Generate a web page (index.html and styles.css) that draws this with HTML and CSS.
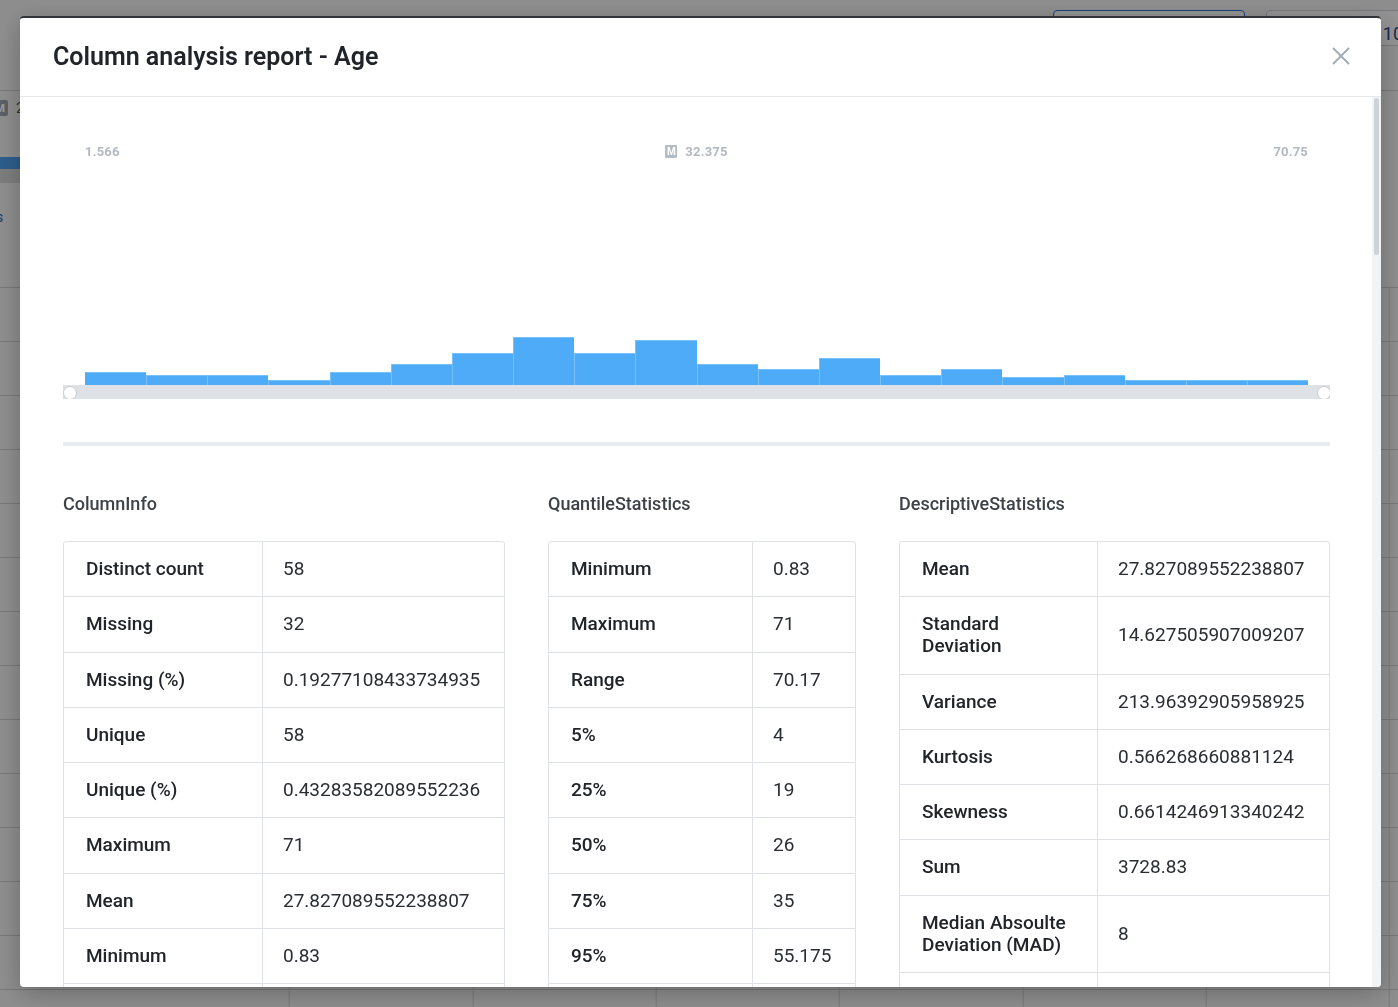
FILE: index.html
```html
<!DOCTYPE html>
<html lang="en">
<head>
<meta charset="utf-8">
<title>Column analysis report - Age</title>
<link rel="stylesheet" href="styles.css">
</head>
<body>
<div class="app">
  <div class="toolbar">
    <div class="tb-btn primary"></div>
    <div class="tb-btn last"><span class="tb-num">10</span></div>
  </div>
  <div class="grid-head"><span class="mini-badge">M</span><span class="head-num">2</span></div>
  <div class="profile">
    <div class="profile-bar"></div>
    <div class="profile-band"></div>
    <div class="profile-link">s</div>
  </div>
  <div class="grid-rows"></div>
</div>

<div class="backdrop"></div>

<div class="modal" role="dialog" aria-labelledby="modal-title">
  <header class="modal-header">
    <h2 id="modal-title" class="modal-title">Column analysis report - Age</h2>
    <button class="close-btn" type="button" aria-label="Close">
      <svg viewBox="0 0 18 18" width="18" height="18" aria-hidden="true"><path d="M1 1 L17 17 M17 1 L1 17" fill="none" stroke="#a3a9b0" stroke-width="1.8"/></svg>
    </button>
  </header>

  <div class="modal-body">
    <div class="modal-scroll">
      <div class="chart">
        <div class="axis-labels">
          <span>1.566</span>
          <span class="median"><span class="median-badge">M</span>32.375</span>
          <span>70.75</span>
        </div>
        <div class="bars">
          <div class="bar" style="height:13px"></div>
          <div class="bar" style="height:10px"></div>
          <div class="bar" style="height:10px"></div>
          <div class="bar" style="height:5px"></div>
          <div class="bar" style="height:13px"></div>
          <div class="bar" style="height:21px"></div>
          <div class="bar" style="height:32px"></div>
          <div class="bar" style="height:48px"></div>
          <div class="bar" style="height:32px"></div>
          <div class="bar" style="height:45px"></div>
          <div class="bar" style="height:21px"></div>
          <div class="bar" style="height:16px"></div>
          <div class="bar" style="height:27px"></div>
          <div class="bar" style="height:10px"></div>
          <div class="bar" style="height:16px"></div>
          <div class="bar" style="height:8px"></div>
          <div class="bar" style="height:10px"></div>
          <div class="bar" style="height:5px"></div>
          <div class="bar" style="height:5px"></div>
          <div class="bar" style="height:5px"></div>
        </div>
        <div class="range">
          <span class="handle handle-left"></span>
          <span class="handle handle-right"></span>
        </div>
      </div>

      <div class="divider"></div>

      <div class="stats">
        <section class="stat-section">
          <h3 class="stat-title">ColumnInfo</h3>
          <div class="kv kv-info">
            <div class="k">Distinct count</div><div class="v">58</div>
            <div class="k">Missing</div><div class="v">32</div>
            <div class="k">Missing (%)</div><div class="v">0.19277108433734935</div>
            <div class="k">Unique</div><div class="v">58</div>
            <div class="k">Unique (%)</div><div class="v">0.43283582089552236</div>
            <div class="k">Maximum</div><div class="v">71</div>
            <div class="k">Mean</div><div class="v">27.827089552238807</div>
            <div class="k">Minimum</div><div class="v">0.83</div>
            <div class="k">Zeros</div><div class="v">0</div>
          </div>
        </section>

        <section class="stat-section">
          <h3 class="stat-title">QuantileStatistics</h3>
          <div class="kv kv-quant">
            <div class="k">Minimum</div><div class="v">0.83</div>
            <div class="k">Maximum</div><div class="v">71</div>
            <div class="k">Range</div><div class="v">70.17</div>
            <div class="k">5%</div><div class="v">4</div>
            <div class="k">25%</div><div class="v">19</div>
            <div class="k">50%</div><div class="v">26</div>
            <div class="k">75%</div><div class="v">35</div>
            <div class="k">95%</div><div class="v">55.175</div>
            <div class="k">IQR</div><div class="v">16</div>
          </div>
        </section>

        <section class="stat-section">
          <h3 class="stat-title">DescriptiveStatistics</h3>
          <div class="kv kv-desc">
            <div class="k">Mean</div><div class="v">27.827089552238807</div>
            <div class="k">Standard Deviation</div><div class="v">14.627505907009207</div>
            <div class="k">Variance</div><div class="v">213.96392905958925</div>
            <div class="k">Kurtosis</div><div class="v">0.566268660881124</div>
            <div class="k">Skewness</div><div class="v">0.6614246913340242</div>
            <div class="k">Sum</div><div class="v">3728.83</div>
            <div class="k">Median Absoulte Deviation (MAD)</div><div class="v">8</div>
            <div class="k">CV</div><div class="v">0.5256571758508617</div>
          </div>
        </section>
      </div>
    </div>
    <div class="scrollbar" aria-hidden="true"><div class="scrollbar-thumb"></div></div>
  </div>
</div>
</body>
</html>
```

FILE: styles.css
```css
html, body {
  margin: 0;
  padding: 0;
}

body {
  font-family: Roboto, "Noto Sans", "Liberation Sans", Arial, sans-serif;
  background: #ececec;
  height: 1007px;
  overflow: hidden;
}

/* ---------- background application (behind the modal) ---------- */
.app {
  height: 1007px;
  display: flex;
  flex-direction: column;
  background: #ececec;
}

.toolbar {
  height: 91px;
  box-sizing: border-box;
  display: flex;
  justify-content: flex-end;
  align-items: flex-start;
  gap: 21px;
  padding-top: 10px;
  margin-right: -10px;
  border-bottom: 1px solid #c9c9c9;
}

.tb-btn {
  width: 192px;
  height: 36px;
  box-sizing: border-box;
  border: 1px solid #c7ccd2;
  border-radius: 4px;
  background: #f4f4f4;
}

.tb-btn.primary {
  border-color: #2b6fd6;
}

.tb-btn.last {
  width: 142px;
  display: flex;
  align-items: center;
  justify-content: flex-end;
  padding-right: 4px;
}

.tb-num {
  font-size: 18px;
  color: #1c4a86;
  margin-top: 10px;
}

.grid-head {
  height: 54px;
  box-sizing: border-box;
  display: flex;
  align-items: flex-start;
  padding-top: 9px;
  gap: 8px;
  margin-left: -8px;
}

.mini-badge {
  width: 16px;
  height: 16px;
  background: #9aa0a8;
  color: #fff;
  font-size: 11px;
  font-weight: 700;
  display: flex;
  align-items: center;
  justify-content: center;
  border-radius: 2px;
}

.head-num {
  font-size: 14px;
  line-height: 16px;
  color: #555;
}

.profile {
  height: 142px;
  display: flex;
  flex-direction: column;
  padding-top: 12px;
  box-sizing: border-box;
}

.profile-bar {
  width: 200px;
  height: 12px;
  background: #4b9be8;
}

.profile-band {
  width: 200px;
  height: 14px;
  background: #d0d0d0;
}

.profile-link {
  margin-top: 26px;
  margin-left: -4px;
  font-size: 14px;
  color: #1d56a8;
}

.grid-rows {
  flex: 1;
  border-top: 1px solid #c9c9c9;
  background-image:
    repeating-linear-gradient(to bottom, transparent 0 53px, #c9c9c9 53px 54px),
    repeating-linear-gradient(to right, transparent 0 182.33px, #c9c9c9 182.33px 183.33px);
  background-position: 0 0, 106.67px 0;
}

.backdrop {
  position: fixed;
  inset: 0;
  background: rgba(0, 0, 0, 0.4);
}

/* ---------- modal ---------- */
.modal {
  position: fixed;
  left: 20px;
  top: 16px;
  width: 1361px;
  height: 971px;
  box-sizing: border-box;
  background: #fff;
  border-top: 2px solid #303338;
  border-radius: 4px;
  box-shadow: 0 6px 24px rgba(0, 0, 0, 0.25);
  display: flex;
  flex-direction: column;
  overflow: hidden;
}

.modal-header {
  flex-shrink: 0;
  height: 79px;
  box-sizing: border-box;
  padding: 0 31px 2px 33px;
  border-bottom: 1px solid #e6e8eb;
  display: flex;
  align-items: center;
  justify-content: space-between;
}

.modal-title {
  margin: 0;
  font-size: 25px;
  font-weight: 600;
  color: #212529;
  letter-spacing: 0;
}

.close-btn {
  width: 18px;
  height: 18px;
  padding: 0;
  border: 0;
  background: none;
  display: flex;
  cursor: pointer;
}

.modal-body {
  flex: 1;
  min-height: 0;
  display: flex;
}

.modal-scroll {
  flex: 1;
  min-width: 0;
  overflow: hidden;
  padding: 46px 42px 0 43px;
}

.scrollbar {
  width: 9px;
  flex-shrink: 0;
  box-sizing: border-box;
  padding: 1px 2px;
  background: #f1f3f5;
}

.scrollbar-thumb {
  height: 157px;
  background: #ced3d8;
  border-radius: 3px;
}

/* ---------- chart ---------- */
.axis-labels {
  display: flex;
  justify-content: space-between;
  align-items: center;
  padding: 0 22px;
  height: 16px;
  font-size: 13px;
  font-weight: 700;
  color: #b3b9c0;
  letter-spacing: 0.2px;
}

.median {
  display: flex;
  align-items: center;
}

.median-badge {
  width: 12px;
  height: 13px;
  background: #b6bcc3;
  color: #fff;
  font-size: 10px;
  font-weight: 700;
  line-height: 13px;
  text-align: center;
  margin-right: 8px;
  border-radius: 1px;
  letter-spacing: 0;
}

.bars {
  display: flex;
  align-items: flex-end;
  height: 226px;
  margin: 0 22px;
}

.bar {
  flex: 1;
  box-sizing: border-box;
  background: #4dabf7;
  border-top: 1px solid #79c0fa;
  border-left: 1px solid #79c0fa;
}

.bar:first-child {
  border-left-color: #4dabf7;
}

.range {
  position: relative;
  height: 14px;
  background: #dee2e6;
  overflow: hidden;
}

.handle {
  position: absolute;
  top: 1px;
  width: 12px;
  height: 12px;
  background: #fff;
  border: 1px solid #c8cdd3;
  border-radius: 50%;
}

.handle-left {
  left: 0;
}

.handle-right {
  right: -1px;
}

.divider {
  height: 4px;
  background: #e9ecef;
  margin-top: 43px;
}

/* ---------- statistics ---------- */
.stats {
  margin-top: 48px;
  display: grid;
  grid-template-columns: 442px 308px 1fr;
  column-gap: 43px;
  align-items: start;
}

.stat-title {
  margin: 0 0 27px;
  font-size: 18px;
  line-height: 20px;
  font-weight: 500;
  color: #3d4248;
}

.kv {
  display: grid;
  border: 1px solid #dee2e6;
  border-radius: 3px;
}

.kv-info {
  grid-template-columns: 199px 1fr;
}

.kv-quant {
  grid-template-columns: 204px 1fr;
}

.kv-desc {
  grid-template-columns: 198px 1fr;
}

.k,
.v {
  box-sizing: border-box;
  display: flex;
  align-items: center;
  padding: 16.125px 18px 16.125px 22px;
  line-height: 22px;
  font-size: 19px;
  color: #212529;
  border-bottom: 1px solid #dee2e6;
}

.k {
  font-weight: 500;
  border-right: 1px solid #dee2e6;
}

.v {
  font-weight: 400;
  color: #2a2e33;
  padding-left: 20px;
}
```
